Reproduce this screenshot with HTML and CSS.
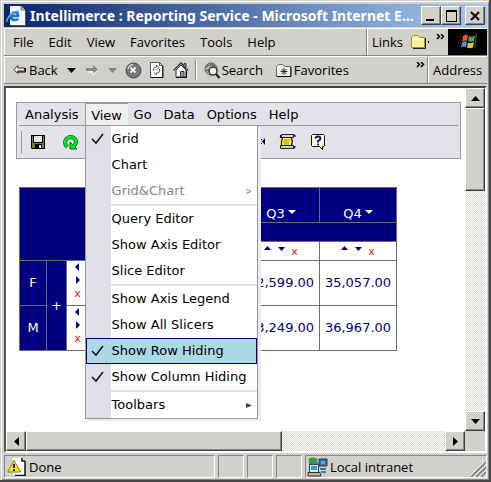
FILE: index.html
```html
<!DOCTYPE html>
<html lang="en">
<head>
<meta charset="utf-8">
<title>Intellimerce : Reporting Service</title>
<link rel="stylesheet" href="styles.css">
</head>
<body>
<div class="window">
  <header class="titlebar">
    <svg class="app-icon" width="20" height="20" viewBox="0 0 20 20"><path d="M4 0h11l4 4v15H4z" fill="#f4f4ee"/><path d="M15 0v4h4" fill="#bbb" stroke="#777"/><path d="M19.500 4v15.500H5" fill="none" stroke="#555"/><path d="M12 12.500c-1 2-6.500 2.500-7-1.500s4-6 6.500-3.500c.5.500.8 1.500.7 2.500H6" fill="none" stroke="#1674d8" stroke-width="2.500"/><path d="M1 16C0 12 8 4 13 5" fill="none" stroke="#58b0f4" stroke-width="1.500"/></svg>
    <h1>Intellimerce : Reporting Service - Microsoft Internet E...</h1>
    <div class="window-buttons">
      <button class="raised" aria-label="Minimize"><svg width="14" height="14"><path d="M2 10h8v2H2z"/></svg></button>
      <button class="raised" aria-label="Maximize"><svg width="14" height="14"><path d="M2 1h11v12H2zM3 3v9h9V3z" fill-rule="evenodd"/></svg></button>
      <button class="raised close" aria-label="Close"><svg width="14" height="14"><path d="M3 3l8 8M11 3l-8 8" stroke="#000" stroke-width="2"/></svg></button>
    </div>
  </header>

  <div class="bar menu-row">
    <nav class="band app-menu">
      <button>File</button><button>Edit</button><button>View</button><button>Favorites</button><button>Tools</button><button>Help</button>
    </nav>
    <div class="band links">
      <span>Links</span>
      <svg width="19" height="14" viewBox="0 0 19 14"><path d="M.5 2.500l2-2h4l2 2h5v10H.5z" fill="#fbf3a0" stroke="#a89018"/><path d="M1 4.500h12" stroke="#fff"/><path d="M14.500 3v10.500H2" fill="none" stroke="#222"/><path d="M17 6h1v2h-1z"/></svg>
      <button class="more" aria-label="More links"><svg width="9" height="6"><path d="M1 0l2.500 2.500L1 5M5 0l2.500 2.500L5 5" fill="none" stroke="#000" stroke-width="1.500"/></svg></button>
    </div>
    <div class="brand">
      <svg width="20" height="18" viewBox="0 0 20 18"><path d="M5 3q3-2 5-.5L9 8q-2-1-5 .5z" fill="#d65a38"/><path d="M11 3q3 1.500 6-.5l-1 5.500q-3 1.500-6 0z" fill="#58a058"/><path d="M4 9.500q3-2 5-.5l-1 5q-2-1-5 .5z" fill="#5b8fd8"/><path d="M10 9.500q3 1.500 6-.5l-1 5.500q-3 1.500-6 0z" fill="#dcc358"/><path d="M0 4h3M1 7h2M0 10h3M1 13h2" stroke="#8a3538" stroke-dasharray="1 1"/><path d="M18.500 1l-2 14" stroke="#555"/></svg>
    </div>
  </div>

  <div class="bar tool-row">
    <div class="band tools">
      <button class="back"><svg width="13" height="10" viewBox="0 0 13 10"><path d="M.8 4.500l4-4v2.500h6.700v3H4.800v2.500z" fill="#eee" stroke="#333"/><path d="M5 7h7.500V3" fill="none" stroke="#000"/></svg>Back</button>
      <button class="caret" aria-label="Back history"><svg width="9" height="5"><path d="M0 0h9L4.500 5z"/></svg></button>
      <button class="forward" aria-label="Forward"><svg width="13" height="10"><path d="M0 3h7V0l5 4.500L7 9V6H0z" fill="#8c8c8c"/><path d="M1 7h6v3l5-4.500" fill="none" stroke="#fff"/></svg></button>
      <button class="caret" aria-label="Forward history"><svg width="9" height="5"><path d="M0 0h9L4.500 5z" fill="#858585"/></svg></button>
      <button class="stop" aria-label="Stop"><svg width="17" height="17"><circle cx="8.500" cy="8.500" r="7.500" fill="#777" stroke="#444"/><path d="M3 7q1-4 5-4.500" fill="none" stroke="#ccc" stroke-width="1.500"/><path d="M5.500 5.500l5 5M10.500 5.500l-5 5" stroke="#fff" stroke-width="1.800"/></svg></button>
      <button class="refresh" aria-label="Refresh"><svg width="14" height="16"><path d="M.5.500h9l3 3v12H.5z" fill="#fff" stroke="#555"/><path d="M13 4v11.500H1" fill="none" stroke="#111"/><path d="M9.500.500v3h3" fill="none" stroke="#555"/><path d="M3.500 9V7q0-2 3-2V3l2.500 2.500L6.500 8M9.500 7v2q0 2-3 2v2L4 10.500" fill="none" stroke="#555"/></svg></button>
      <button class="home" aria-label="Home"><svg width="16" height="16"><path d="M3 8l5-5 5 5v7H3z" fill="#fff" stroke="#333"/><path d="M0.500 8.500L8 1l7 7.500" fill="none" stroke="#333" stroke-width="1.300"/><path d="M11 1.500h2V5h-2zM7.500 9.500H11V15H7.500z" fill="#999" stroke="#333"/><path d="M13.500 9v6.500H3" fill="none" stroke="#000"/></svg></button>
      <span class="rule"></span>
      <button class="search"><svg width="17" height="17"><circle cx="7" cy="7" r="6" fill="#bbb" stroke="#555"/><path d="M2 5q4-4 9-1M2 9q4-3 4 3" fill="none" stroke="#666" stroke-width="1.500"/><circle cx="9" cy="9" r="4" fill="#eee" stroke="#333" stroke-width="1.500"/><path d="M12 12l3.500 4" stroke="#222" stroke-width="2.300"/></svg>Search</button>
      <button class="favorites"><svg width="16" height="13"><path d="M.5 2.500l2-2h4l2 2h6v10H.5z" fill="#eee" stroke="#666"/><path d="M15 3v9.500H1" fill="none" stroke="#111"/><path d="M8 4v7M4.500 7.500h7M5.500 5l5 5M10.500 5l-5 5" stroke="#222" stroke-width=".9"/></svg>Favorites</button>
      <button class="more" aria-label="More tools"><svg width="9" height="6"><path d="M1 0l2.500 2.500L1 5M5 0l2.500 2.500L5 5" fill="none" stroke="#000" stroke-width="1.500"/></svg></button>
    </div>
    <div class="band address">Address</div>
  </div>

  <div class="viewport">
    <main class="page">
      <section class="panel">
        <nav class="page-menu">
          <button>Analysis</button>
          <div class="open-menu">
            <button class="open" aria-expanded="true">View</button>
            <ul class="dropdown">
              <li><button><svg class="check" width="14" height="12"><path d="M1 6l4 4L12 1" fill="none" stroke="#111" stroke-width="1.500"/></svg><span>Grid</span></button></li>
              <li><button><span>Chart</span></button></li>
              <li><button disabled><span>Grid&amp;Chart</span><svg class="sub" width="6" height="5"><path d="M0 .5L5 2.500 0 4.500" fill="none" stroke="#888"/></svg></button></li>
              <li class="separator"></li>
              <li><button><span>Query Editor</span></button></li>
              <li><button><span>Show Axis Editor</span></button></li>
              <li><button><span>Slice Editor</span></button></li>
              <li class="separator"></li>
              <li><button><span>Show Axis Legend</span></button></li>
              <li><button><span>Show All Slicers</span></button></li>
              <li><button class="selected"><svg class="check" width="14" height="12"><path d="M1 6l4 4L12 1" fill="none" stroke="#111" stroke-width="1.500"/></svg><span>Show Row Hiding</span></button></li>
              <li><button><svg class="check" width="14" height="12"><path d="M1 6l4 4L12 1" fill="none" stroke="#111" stroke-width="1.500"/></svg><span>Show Column Hiding</span></button></li>
              <li class="separator"></li>
              <li><button><span>Toolbars</span><svg class="sub" width="6" height="5"><path d="M0 0l6 2.500L0 5z" fill="#444"/></svg></button></li>
            </ul>
          </div>
          <button>Go</button><button>Data</button><button>Options</button><button>Help</button>
        </nav>
        <div class="page-tools">
          <span class="grip"></span>
          <button aria-label="Save"><svg width="14" height="14"><path d="M0 0h14v14H1L0 13z"/><path d="M1 1h1v7h10V1h1v12h-2V9H4v4H1z" fill="#80802a"/><path d="M3 1h8v6H3z" fill="#e6e6e8"/><path d="M8 10h2v3H8z" fill="#fff"/></svg></button>
          <button aria-label="Refresh data"><svg width="16" height="15"><path d="M4.500 12Q1 9 2.500 5.500 4.500 2 8 2q4.500.5 5 4.500 0 3-2.500 4.500" fill="none" stroke="#063" stroke-width="4"/><path d="M7 7v7h7z" fill="#0e0" stroke="#063"/><path d="M4.500 12Q1 9 2.500 5.500 4.500 2 8 2q4.500.5 5 4.500 0 3-2.500 4.500" fill="none" stroke="#0e2" stroke-width="2.500"/></svg></button>
          <span class="spacer"></span>
          <button aria-label="Arrange"><svg width="20" height="14"><path d="M18 3v7l-3-3.500z" fill="#000080"/><path d="M13 4h2v1h-2zM13 8h2v1h-2z"/></svg></button>
          <button aria-label="Script"><svg width="17" height="16"><path d="M3 4h9v9H3z" fill="#ffff40"/><path d="M2.500.500h12v3h-12zM1.500 11.500h13v3h-13z" fill="#d0d0d0" stroke="#222"/><path d="M1.500 1v2.500h2L2.500 8v3.500M12 4l1.500 3-1 4.500M14.500.500l1.500 1v1.500M14.500 14.500l1.500-1.500v-1" fill="none" stroke="#111" stroke-width="1.200"/><path d="M5 6h6M4 8h6M5 10h5" stroke="#998800"/></svg></button>
          <button aria-label="Help topics"><svg width="15" height="16"><path d="M1.500.500h11l1 1v10l-1 1h-1v3l-3-3h-7l-1-1v-10z" fill="#ffffd8" stroke="#111"/><path d="M4.500 4.500q0-2 2.500-2t2.500 2q0 1.500-2.500 2.500v1.500M7 9.500v1.800" fill="none" stroke="#000090" stroke-width="1.800"/></svg></button>
        </div>
      </section>

      <table class="pivot">
        <colgroup><col class="c-gender"><col class="c-plus"><col class="c-move"><col class="c-data"><col class="c-data"><col class="c-data"><col class="c-data"></colgroup>
        <thead>
          <tr class="quarters"><th colspan="3" rowspan="3"></th><th></th><th></th><th>Q3<i></i></th><th>Q4<i></i></th></tr>
          <tr class="blank"><th colspan="4"></th></tr>
          <tr class="hiders">
            <td></td><td></td>
            <td><svg width="23" height="6"><path d="M0 4L3.500 0 7 4zM14 1h7l-3.500 4z" fill="#000080"/></svg><b>x</b></td>
            <td><svg width="23" height="6"><path d="M0 4L3.500 0 7 4zM14 1h7l-3.500 4z" fill="#000080"/></svg><b>x</b></td>
          </tr>
        </thead>
        <tbody>
          <tr><th>F</th><th rowspan="2">+</th><td class="move"><svg width="6" height="22"><path d="M4 0v8L0 4zM1 13v8l4-4z" fill="#000080"/></svg><b>x</b></td><td></td><td></td><td>32,599.00</td><td>35,057.00</td></tr>
          <tr><th>M</th><td class="move"><svg width="6" height="22"><path d="M4 0v8L0 4zM1 13v8l4-4z" fill="#000080"/></svg><b>x</b></td><td></td><td></td><td>33,249.00</td><td>36,967.00</td></tr>
        </tbody>
      </table>
    </main>
    <div class="scroll vertical">
      <button class="raised" aria-label="Scroll up"><svg width="9" height="5"><path d="M0 5h9L4.500 0z"/></svg></button>
      <div class="raised thumb"></div>
      <button class="raised end" aria-label="Scroll down"><svg width="9" height="5"><path d="M0 0h9L4.500 5z"/></svg></button>
    </div>
    <div class="scroll horizontal">
      <button class="raised" aria-label="Scroll left"><svg width="5" height="9"><path d="M5 0v9L0 4.500z"/></svg></button>
      <div class="raised thumb"></div>
      <button class="raised end" aria-label="Scroll right"><svg width="5" height="9"><path d="M0 0v9l5-4.500z"/></svg></button>
    </div>
    <div class="corner"></div>
  </div>

  <footer class="status">
    <div class="pane done"><svg width="19" height="19"><path d="M6 1h9l3 3v14H6z" fill="#fff"/><path d="M15 1v3h3M18 4v14.500H8" fill="none" stroke="#111" stroke-width="1.500"/><path d="M7 3.500L13.500 15H.8z" fill="#f8ee10" stroke="#8a7b00"/><path d="M7 7v4M7 12v2" stroke="#111" stroke-width="1.800"/></svg>Done</div>
    <div class="pane small"></div><div class="pane small"></div><div class="pane small"></div>
    <div class="pane zone"><svg width="21" height="20"><path d="M12 2h8v7h-8z" fill="#4a6e98" stroke="#334"/><path d="M14 4h4v3h-4z" fill="#37b6f0"/><path d="M2 5h9v5H2z" fill="#337fae"/><ellipse cx="6" cy="3" rx="4.500" ry="2.500" fill="#3c9c3c"/><path d="M2.500 7.500h9v8h-9z" fill="#d8e4ec" stroke="#345"/><path d="M4 9h6v4H4z" fill="#22a5e8"/><path d="M1 15.500h12l1 3.500H1z" fill="#bbb59c" stroke="#333"/><path d="M13 11h6v2h-6zM14 14h5v2h-5z" fill="#367dad"/></svg>Local intranet
      <svg class="resize" width="16" height="16"><path d="M1 16L16 1M6 16L16 6M11 16l5-5" stroke="#888" stroke-width="2"/><path d="M0 15L15 0M4 16L16 4M9 16l7-7" stroke="#fff"/></svg></div>
  </footer>
</div>
</body>
</html>
```
FILE: styles.css
```css
* { box-sizing: border-box; }
body { margin: 0; font: 13px/18px "Open Sans", sans-serif; color: #000; }
button { margin: 0; padding: 0; border: 0; background: none; font: inherit; color: inherit; }
svg { display: block; flex: none; }

.window {
  display: flex; flex-direction: column; height: 100vh; padding: 4px 2px 2px 4px;
  background: #d1d0ca; border: solid; border-width: 0 2px 2px 0; border-color: #484848;
  box-shadow: inset 1px 1px #d1d0ca, inset 2px 2px #fff, inset -1px -1px #888;
}
.raised {
  display: grid; place-items: center; background: #d1d0ca; border: 1px solid;
  border-color: #fff #404040 #404040 #fff; box-shadow: inset -1px -1px #858585;
}

.titlebar {
  display: flex; align-items: center; flex: none; height: 23px; padding: 0 2px;
  background: linear-gradient(90deg, #0a246a, #a6caf0);
}
.titlebar h1 { flex: 1; min-width: 0; margin: 0 0 0 4px; overflow: hidden; color: #fff; font: bold 14px/20px "Noto Sans", sans-serif; white-space: nowrap; }
.window-buttons { display: flex; }
.window-buttons button { width: 20px; height: 19px; }
.window-buttons .close { margin-left: 4px; }

.bar { display: flex; flex: none; height: 28px; border-top: 1px solid #fff; border-bottom: 1px solid #858585; }
.menu-row { margin-top: 1px; }
.band { display: flex; align-items: center; border-left: 1px solid #fff; }
.app-menu { flex: 1; gap: 15px; padding-left: 8px; border-right: 1px solid #858585; }
.links { width: 81px; padding-left: 4px; gap: 8px; }
.more { align-self: flex-start; padding-top: 5px; }
.links .more { margin-left: -2px; }
.brand { display: grid; place-items: center; width: 39px; background: #000; }
.tools { flex: 1; padding-left: 8px; border-right: 1px solid #858585; }
.tools button { display: flex; align-items: center; }
.back { gap: 3px; }
.tools .caret { margin-left: 9px; }
.tools .forward { margin-left: 10px; }
.tools .stop { margin-left: 8px; }
.tools .refresh { margin-left: 8px; }
.tools .home { margin-left: 9px; }
.rule { width: 2px; height: 20px; margin: 0 7px 0 6px; background: #858585; border-right: 1px solid #fff; }
.search { gap: 1px; }
.tools .favorites { gap: 2px; margin-left: 13px; }
.tools .more { margin-left: auto; margin-right: 2px; }
.address { width: 59px; padding-left: 4px; }

.viewport {
  display: grid; grid-template: minmax(0, 1fr) 20px / minmax(0, 1fr) 20px; flex: 1; min-height: 0;
  margin-top: 2px; border: 2px solid; border-color: #444 #fff #fff #555; background: #fff;
}
.page { padding: 14px 4px 0 10px; font: 13px/18px "DejaVu Sans", sans-serif; }
.scroll { display: flex; background: repeating-conic-gradient(#fff 0 25%, #d6d5cc 0 50%) 0 0 / 2px 2px; }
.vertical { flex-direction: column; }
.vertical button, .horizontal button { flex: none; width: 20px; height: 20px; }
.vertical .thumb { height: 83px; }
.horizontal .thumb { width: 256px; }
.scroll .end { margin-top: auto; margin-left: auto; }
.corner { background: #d1d0ca; }

.panel { border: 1px solid #9c9ca0; background: #e3e3e7; height: 57px; }
.page-menu { display: flex; margin: 0 2px; height: 23px; border-bottom: 1px solid #98989f; }
.page-menu > button { padding: 2px 6px 0; }
.open-menu { position: relative; display: flex; }
.open { width: 43px; padding-top: 2px; background: #efefef; border: 1px solid #9c9ca0; border-width: 1px 0 0 1px; }
.page-tools { display: flex; align-items: center; height: 32px; padding: 0 4px; }
.grip { width: 1px; height: 22px; margin-right: 9px; background: #98988c; }
.page-tools button { flex: none; width: 32px; height: 16px; }
.spacer { width: 152px; }

.dropdown {
  position: absolute; top: 22px; left: 0; z-index: 2; width: 173px; margin: 0; padding: 0; list-style: none;
  border: 1px solid #999; background: linear-gradient(90deg, #dfe0e6 25px, #fff 25px); box-shadow: 3px 2px #ececee;
}
.dropdown button { position: relative; display: flex; align-items: center; width: 100%; height: 26px; padding-left: 26px; }
.dropdown button:disabled { color: #858585; }
.dropdown .selected { background: #add8e6; outline: 1px solid #000080; outline-offset: -1px; }
.check { position: absolute; left: 5px; }
.sub { margin: 0 5px 0 auto; }
.separator { height: 2px; margin-left: 25px; background: #dfe0e6; }

.pivot { margin: 28px 0 0 3px; border-collapse: collapse; table-layout: fixed; width: 378px; color: #000080; font-size: 13px; line-height: 16px; }
.pivot th, .pivot td { padding: 0; border: 1px solid #6b6b6b; text-align: center; white-space: nowrap; }
.pivot th { background: #000080; color: #fff; font-weight: normal; }
.c-gender { width: 27px; }
.c-plus { width: 20px; }
.c-move { width: 22px; }
.c-data { width: 77px; }
.quarters { height: 35px; }
.quarters th { vertical-align: bottom; }
.quarters i { display: inline-block; margin-left: 3px; border: 4px solid transparent; border-top-color: #fff; border-bottom: 0; vertical-align: 4px; }
.blank, .hiders { height: 19px; }
.hiders svg { display: inline-block; vertical-align: 3px; }
.pivot b { color: #e01010; font-size: 11px; font-weight: normal; line-height: 12px; }
.pivot .hiders b { margin-left: 4px; }
.pivot tbody tr { height: 45px; }
.move svg { margin: 0 auto; }
.pivot .move b { display: block; line-height: 18px; }

.status { display: flex; flex: none; gap: 3px; height: 23px; margin-top: 2px; }
.pane { display: flex; align-items: center; border: 1px solid; border-color: #858585 #fff #fff #858585; }
.done { width: 211px; gap: 3px; padding-left: 2px; }
.small { width: 26px; }
.zone { position: relative; flex: 1; gap: 2px; padding-left: 1px; }
.resize { position: absolute; right: 0; bottom: 0; }
```
